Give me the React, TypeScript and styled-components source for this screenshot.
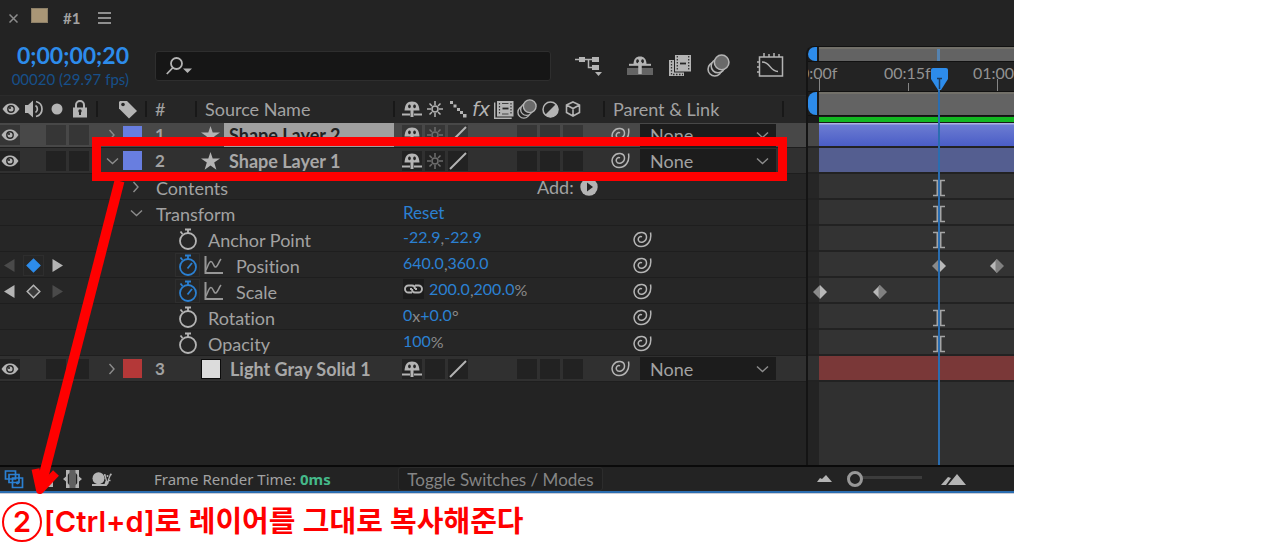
import React from "react";
import styled, { createGlobalStyle } from "styled-components";

const blue = "#2d8ceb";
const text = "#a2a2a2";
const icon = "#b4b4b4";

const Global = createGlobalStyle`
  * { box-sizing: border-box; }
  body { margin: 0; background: #fff; font-family: Lato, "Noto Sans CJK KR", sans-serif; font-variant-ligatures: none; }
  button, input, select { font: inherit; color: inherit; margin: 0; padding: 0; border: 0; background: none; }
  svg { display: block; flex: none; }
`;

const Page = styled.main`
  position: relative;
  overflow: hidden;
`;

const Panel = styled.section`
  width: 100%;
  max-width: 1014px;
  background: #232323;
  color: ${text};
  font-size: 18px;
  line-height: 24px;
  border-bottom: 1px solid #c9ccd6;
`;

const Workspace = styled.div`
  display: grid;
  grid-template-columns: 806px minmax(0, 1fr);
`;

const Outline = styled.div`
  display: flex;
  flex-direction: column;
`;

const TabBar = styled.div`
  display: flex;
  align-items: center;
  height: 36px;
  padding-left: 9px;
`;

const TabClose = styled.button`
  width: 22px;
  display: flex;
`;

const CompSwatch = styled.span`
  width: 17px;
  height: 15px;
  margin-bottom: 5px;
  background: #a99676;
  border: 1px solid #8d8068;
`;

const TabName = styled.span`
  width: 35px;
  margin-left: 15px;
  font-size: 15px;
  font-weight: 700;
`;

const IconButton = styled.button`
  display: flex;
  align-items: center;
  justify-content: center;
`;

const Toolbar = styled.div`
  display: flex;
  align-items: center;
  height: 59px;
`;

const TimeBlock = styled.div`
  width: 129px;
  margin-right: 26px;
  text-align: right;
  white-space: nowrap;
`;

const Timecode = styled.div`
  color: ${blue};
  font-size: 23px;
  font-weight: 700;
  line-height: 26px;
`;

const FrameRate = styled.div`
  color: #17508a;
  font-size: 15px;
  line-height: 22px;
`;

const SearchBox = styled.label`
  display: flex;
  align-items: center;
  width: 396px;
  height: 30px;
  padding-left: 10px;
  background: #161616;
  border: 1px solid #2e2e2e;
  border-radius: 3px;
  input { flex: 1; min-width: 0; outline: 0; }
`;

const ToolGroup = styled.div`
  display: flex;
  align-items: center;
  gap: 17px;
  margin-left: 24px;
`;

const ToolSet = styled.div`
  display: flex;
  align-items: center;
  gap: 16px;
  padding: 0 10px 0 8px;
`;

const outlineColumns = "92px 31px 32px 50px 197px 206px minmax(0, 1fr)";

const HeaderRow = styled.div`
  display: grid;
  grid-template-columns: 98px 49px 50px 198px 210px 179px minmax(0, 1fr);
  align-items: center;
  height: 28px;
  padding-bottom: 1px;
  background: #262626;
  border-top: 1px solid #2b2b2b;
`;

const HeaderCell = styled.div<{ $pad?: number }>`
  display: flex;
  align-items: center;
  height: 16px;
  padding-left: ${(p) => p.$pad ?? 8}px;
  border-right: 2px solid #181818;
`;

const SwitchStrip = styled.div`
  display: flex;
  gap: 3px;
`;

const Slot = styled.span`
  display: flex;
  align-items: center;
  justify-content: center;
  width: 20px;
  height: 20px;
`;

const SwitchCell = styled.button<{ $fill: string }>`
  display: flex;
  align-items: center;
  justify-content: center;
  width: 20px;
  height: 20px;
  background: ${(p) => p.$fill};
`;

const LayerRow = styled.div<{ $selected?: boolean; $first?: boolean }>`
  display: grid;
  grid-template-columns: ${outlineColumns};
  align-items: center;
  height: ${(p) => (p.$first ? 25 : 26)}px;
  background: ${(p) => (p.$selected ? "#484848" : "#303030")};
  border-bottom: 1px solid #1e1e1e;
`;

const Twirl = styled.button`
  display: flex;
  align-items: center;
  justify-content: center;
  width: 20px;
  height: 20px;
`;

const TwirlCell = styled.div`
  padding-left: 10px;
`;

const LabelColor = styled.button<{ $color: string }>`
  width: 19px;
  height: 19px;
  background: ${(p) => p.$color};
`;

const LayerNumber = styled.span`
  font-size: 17px;
  font-weight: 700;
`;

const LayerSource = styled.div`
  display: flex;
  align-items: center;
  margin-left: -4px;
  gap: 4px;
`;

const LayerName = styled.span<{ $selected?: boolean }>`
  width: 170px;
  height: 24px;
  padding-left: 5px;
  font-weight: 700;
  white-space: nowrap;
  color: ${(p) => (p.$selected ? "#222" : "#a8a8a8")};
  background: ${(p) => (p.$selected ? "#a0a0a0" : "transparent")};
`;

const SolidSwatch = styled.span`
  width: 20px;
  height: 20px;
  background: #dcdcdc;
  border: 1px solid #0c0c0c;
`;

const ParentCell = styled.div`
  display: flex;
  align-items: center;
  gap: 10px;
  padding-left: 3px;
`;

const ParentSelect = styled.span`
  display: flex;
  align-items: center;
  width: 136px;
  height: 23px;
  padding-right: 7px;
  background: #1c1c1c;
  select { flex: 1; appearance: none; padding-left: 10px; outline: 0; }
`;

const PropertyRow = styled.div`
  display: grid;
  grid-template-columns: 119px 284px 229px minmax(0, 1fr);
  align-items: center;
  height: 26px;
  background: #262626;
  border-bottom: 1px solid #1e1e1e;
`;

const KeyNav = styled.div`
  display: flex;
  align-items: center;
  padding-left: 4px;
  gap: 8px;
`;

const KeyToggle = styled.button<{ $active?: boolean }>`
  display: flex;
  align-items: center;
  justify-content: center;
  width: 21px;
  height: 21px;
  border: 1px solid ${(p) => (p.$active ? "#2e2e2e" : "transparent")};
`;

const PropertyName = styled.div<{ $depth?: number }>`
  display: flex;
  align-items: center;
  padding-left: ${(p) => (p.$depth ? 56 : 7)}px;
  gap: ${(p) => (p.$depth ? 8 : 10)}px;
`;

const PropertyLabel = styled.span`
  padding-top: 1px;
  padding-left: 4px;
`;

const GroupLabel = styled.span`
  padding-top: 2px;
`;

const Watch = styled.button<{ $on?: boolean }>`
  display: flex;
  align-items: center;
  justify-content: center;
  width: 25px;
  height: 24px;
  margin-right: -4px;
  border: 1px solid ${(p) => (p.$on ? "#2e2e2e" : "transparent")};
`;

const Value = styled.div<{ $large?: boolean }>`
  display: flex;
  align-items: center;
  padding-bottom: ${(p) => (p.$large ? 0 : 4)}px;
  font-size: ${(p) => (p.$large ? 17 : 16)}px;
  line-height: 20px;
  color: #2b80d2;
`;

const Unit = styled.span`
  padding-top: 2px;
  color: #8a8a8a;
`;

const LinkToggle = styled.button`
  display: flex;
  align-items: center;
  justify-content: center;
  width: 21px;
  height: 20px;
  margin-right: 5px;
  background: #1c1c1c;
`;

const AddMenu = styled.div`
  display: flex;
  align-items: center;
  padding-left: 134px;
  gap: 6px;
`;

const Timeline = styled.div`
  position: relative;
  display: flex;
  flex-direction: column;
  min-width: 0;
  overflow: hidden;
  margin-top: 46px;
  border-left: 2px solid #141414;
  border-top-left-radius: 8px;
`;

const Track = styled.div<{ $tone: string; $first?: boolean }>`
  height: ${(p) => (p.$first ? 25 : 26)}px;
  padding-left: 11px;
  background: ${(p) => p.$tone};
  border-bottom: 2px solid #222;
`;

const TrackFill = styled.div<{ $fill: string }>`
  position: relative;
  height: 100%;
  background: ${(p) => p.$fill};
`;

const Navigator = styled.div<{ $tall?: boolean }>`
  display: flex;
  height: ${(p) => (p.$tall ? 25 : 16)}px;
  border-top: 1px solid #111;
  border-bottom: 1px solid #111;
  background: #1c1c1c;
`;

const RangeHandle = styled.button`
  width: 9px;
  margin-right: 2px;
  background: ${blue};
  border-radius: 8px 0 0 8px;
`;

const RangeBar = styled.div`
  flex: 1;
  background: #636363;
  border-top: 2px solid #727069;
`;

const NavigatorMark = styled.div`
  width: 3px;
  height: 100%;
  margin-left: 118px;
  background: #5583b0;
`;

const Ruler = styled.div`
  height: 29px;
  svg { width: 100%; }
`;

const CachedRange = styled.div`
  height: 7px;
  padding: 1px 0 1px 11px;
  background: #1a1a1a;
  &::after { content: ""; display: block; height: 5px; background: #12b821; }
`;

const EmptyTrack = styled.div`
  flex: 1;
  min-height: 83px;
  margin-left: 11px;
  background: #303030;
`;

const Playhead = styled.div`
  position: absolute;
  top: 22px;
  bottom: 0;
  left: 121px;
  width: 20px;
  display: flex;
  flex-direction: column;
  align-items: center;
  &::after { content: ""; flex: 1; width: 2px; background: #2a6db0; }
`;

const Mark = styled.span<{ $at: number }>`
  position: absolute;
  left: ${(p) => p.$at}px;
  top: 2px;
  height: 100%;
  display: flex;
  align-items: center;
`;

const Footer = styled.footer`
  display: flex;
  align-items: center;
  height: 28px;
  padding-left: 4px;
  border-top: 2px solid #0a0a0a;
  border-bottom: 2px solid #2a6db0;
  background: #232323;
`;

const FooterIcons = styled.div`
  display: flex;
  align-items: center;
  gap: 10px;
  width: 150px;
`;

const RenderTime = styled.span`
  width: 244px;
  font-family: "Noto Sans", sans-serif;
  font-size: 15px;
  b { color: #45b98a; }
`;

const ModesButton = styled.button`
  width: 205px;
  height: 24px;
  font-size: 17px;
  color: #858585;
  border: 1px solid #2c2c2c;
  background: #1f1f1f;
  border-radius: 3px;
`;

const Zoom = styled.label`
  display: flex;
  align-items: center;
  margin-left: 214px;
`;

const ZoomRange = styled.input`
  appearance: none;
  width: 75px;
  height: 16px;
  margin: 0 19px 0 15px;
  &::-webkit-slider-runnable-track {
    height: 16px;
    background: linear-gradient(transparent 5px, #3c3c3c 5px, #3c3c3c 8px, transparent 8px);
  }
  &::-webkit-slider-thumb {
    appearance: none;
    width: 16px;
    height: 16px;
    border: 3px solid #989898;
    border-radius: 50%;
    background: #232323;
  }
`;

const Highlight = styled.div`
  position: absolute;
  left: 92px;
  top: 137px;
  width: 695px;
  height: 44px;
  border: 9px solid #f00;
  pointer-events: none;
`;

const Arrow = styled.svg`
  position: absolute;
  left: 20px;
  top: 170px;
  pointer-events: none;
`;

const Caption = styled.p`
  display: flex;
  align-items: center;
  gap: 2px;
  margin: 0;
  padding: 8px 2px;
  color: #f00;
  font-family: Inter, "Noto Sans CJK KR", sans-serif;
  font-size: 29px;
  font-weight: 600;
  line-height: 40px;
  white-space: nowrap;
`;

const StepNumber = styled.span`
  display: flex;
  align-items: center;
  justify-content: center;
  width: 40px;
  height: 40px;
  border: 2px solid #f00;
  border-radius: 50%;
`;

const Eye = () => (
  <svg width="18" height="12" viewBox="0 0 18 12">
    <path d="M.5 6C3.500 1.500 6 .5 9 .5s5.500 1 8.500 5.500c-3 4.500-5.500 5.500-8.500 5.500S3.500 10.500.5 6z" fill={icon} />
    <circle cx="9" cy="6" r="3.900" fill="#262626" />
    <circle cx="9" cy="6" r="2.500" fill={icon} />
    <circle cx="8" cy="5" r="1.100" fill="#262626" />
  </svg>
);

const Speaker = () => (
  <svg width="20" height="18" viewBox="0 0 20 18" fill="none" stroke={icon} strokeWidth="1.700">
    <path d="M1 5h3L9 .5v17L4 13H1z" fill={icon} stroke="none" />
    <path d="M11.500 5.500c2.500 1.500 2.500 5.500 0 7M12 1.500c8 2 8 13 0 15" />
  </svg>
);

const Lock = () => (
  <svg width="16" height="18" viewBox="0 0 16 18">
    <path d="M4 9V5a4 4 0 0 1 8 0v4" fill="none" stroke={icon} strokeWidth="2" />
    <rect x="1" y="7.500" width="14" height="10" fill={icon} />
    <path d="M8 10v5" stroke="#262626" strokeWidth="2" />
    <circle cx="8" cy="11" r="1.700" fill="#262626" />
  </svg>
);

const Tag = () => (
  <svg width="20" height="19" viewBox="0 0 20 19">
    <path d="M1 2l1-1h7l10 10-8 7.500L1 8.500z" fill={icon} />
    <circle cx="5" cy="4.500" r="1.800" fill="#262626" />
  </svg>
);

const Shy = () => (
  <svg width="20" height="16" viewBox="0 0 20 16">
    <path d="M2.500 9.500C3 3.500 5 .5 10 .5s7 3 7.500 9z" fill={icon} />
    <path d="M7.400 3.500a1.400 1.900 0 1 0 .1 0zM12.500 3.500a1.400 1.900 0 1 0 .1 0z" fill="#262626" />
    <path d="M0 13.500h8M12 13.500h8" stroke={icon} strokeWidth="2" />
    <path d="M10 8v8" stroke={icon} strokeWidth="3" />
  </svg>
);

const ShyMaster = () => (
  <svg width="26" height="20" viewBox="0 0 26 20">
    <path d="M0 12h26v7H0z" fill="#646464" />
    <path d="M6.500 8.500C6.500 3 9 .5 13 .5s6.500 2.500 6.500 8z" fill={icon} />
    <path d="M10.500 3.200a1.400 2 0 1 0 .1 0zM15.500 3.200a1.400 2 0 1 0 .1 0z" fill="#262626" />
    <path d="M2 8.800h22" stroke={icon} strokeWidth="2" />
    <path d="M13 6v12" stroke={icon} strokeWidth="3.500" />
  </svg>
);

const Sun = ({ dim }: { dim?: boolean }) => (
  <svg width="16" height="16" viewBox="0 0 16 16" fill="none" stroke={dim ? "#6e6e6e" : icon} strokeWidth="1.500">
    <circle cx="8" cy="8" r="3" />
    <path d="M8 0v4M8 12v4M0 8h4M12 8h4M2.500 2.500l2.500 2.500M11 11l2.500 2.500M13.500 2.500L11 5M5 11l-2.500 2.500" />
  </svg>
);

const Dotted = () => (
  <svg width="18" height="18" viewBox="0 0 18 18" fill={icon}>
    <path d="M1 1h3v3H1zM4.500 4.500h3v3h-3zM8 8h3v3H8zM11 11h3v3h-3zM14 14h3.500v3.500H14z" />
  </svg>
);

const Slash = () => (
  <svg width="18" height="18" viewBox="0 0 18 18">
    <path d="M1 17L17 1" stroke={icon} strokeWidth="2" />
  </svg>
);

const Fx = styled.i`
  color: ${icon};
  font-family: "DejaVu Sans", sans-serif;
  font-size: 19px;
  line-height: 18px;
`;

const Film = () => (
  <svg width="22" height="23" viewBox="0 0 22 23" fill={icon}>
    <path d="M0 6h5v12.500h10V22H0z" />
    <path d="M6 1h16v16.500H6z" />
    <path d="M2.500 7v14M8.300 2v15M19.700 2v15M4 20.500h10" fill="none" stroke="#333" strokeWidth="1.300" strokeDasharray="1.500 1.500" />
    <path d="M11 9.500h6" stroke="#262626" strokeWidth="1.800" />
  </svg>
);

const FilmBoxed = () => (
  <svg width="20" height="19" viewBox="0 0 20 19">
    <path d="M.7 2.500v15.800h17" fill="none" stroke={icon} strokeWidth="1.400" />
    <path d="M3 1h16.500v15.500H3z" fill={icon} />
    <path d="M5.500 3v12M17 3v12" stroke="#333" strokeWidth="1.200" strokeDasharray="1.500 1.500" />
    <path d="M8 3.500h6.500M8 14h6.500" stroke="#444" strokeWidth="1" />
    <path d="M8.500 8.500h6" stroke="#262626" strokeWidth="1.800" />
  </svg>
);

const Blur = ({ size = 20 }: { size?: number }) => (
  <svg width={size} height={size} viewBox="0 0 22 22" fill="#262626" stroke={icon} strokeWidth="1.500">
    <circle cx="7.500" cy="14.500" r="6.500" />
    <circle cx="10.500" cy="11.500" r="6.500" />
    <circle cx="14" cy="8" r="7" fill="#6a6a6a" />
  </svg>
);

const Adjust = () => (
  <svg width="17" height="17" viewBox="0 0 17 17">
    <circle cx="8.500" cy="8.500" r="7.500" fill="none" stroke={icon} strokeWidth="1.500" />
    <path d="M14 3A7.700 7.700 0 1 1 3 14z" fill={icon} />
  </svg>
);

const Cube = () => (
  <svg width="16" height="16" viewBox="0 0 16 16" fill="none" stroke={icon} strokeWidth="1.600">
    <path d="M8 1l6.500 3v7.500L8 15l-6.500-3.500V4zM1.500 4L8 7.500 14.500 4M8 7.500V15" />
  </svg>
);

const Star = () => (
  <svg width="19" height="18" viewBox="0 0 19 18">
    <path d="M9.500 0l2.200 6.400H19l-5.800 4.200 2.200 7.200-5.900-4.400-5.900 4.400 2.200-7.200L0 6.400h7.300z" fill={icon} />
  </svg>
);

const Whip = () => (
  <svg width="19" height="17" viewBox="0 0 19 17" fill="none" stroke={icon} strokeWidth="1.500">
    <path d="M17.500 1.500c1.500 8-3 14-9.500 14S-.5 8.500 2.500 4.500c3-4.500 11-4 11 1.500 0 5-6.500 7-8 3.500C4.500 7 7 4.800 9 5.800" />
  </svg>
);

const Chevron = ({ down }: { down?: boolean }) =>
  down ? (
    <svg width="13" height="8" viewBox="0 0 13 8" fill="none" stroke="#8c8c8c" strokeWidth="1.400">
      <path d="M1 1.500L6.500 6.500 12 1.500" />
    </svg>
  ) : (
    <svg width="8" height="12" viewBox="0 0 8 12" fill="none" stroke="#8c8c8c" strokeWidth="1.400">
      <path d="M1.500 1L6 6l-4.500 5" />
    </svg>
  );

const Stopwatch = ({ on }: { on?: boolean }) => (
  <svg width="20" height="22" viewBox="0 0 20 22" fill="none" stroke={on ? "#2b80d2" : icon} strokeWidth="1.800">
    <circle cx="10" cy="13" r="8" />
    <path d="M7 1.500h6M10 1.500V5M2.500 3.500L4.500 6" />
    {on && <path d="M9.500 14.500L14 9" />}
  </svg>
);

const Graph = () => (
  <svg width="20" height="19" viewBox="0 0 20 19" fill="none" stroke="#979797" strokeWidth="1.500">
    <path d="M1.500 0v17H19" strokeWidth="2" />
    <path d="M2 14C4 10 5 5.500 7 5.500S10 12 12 11s2.500-5 5-8" />
  </svg>
);

const Chain = () => (
  <svg width="19" height="10" viewBox="0 0 19 10" fill="none" stroke={icon} strokeWidth="1.900">
    <path d="M8 8.500H4.500a3.500 3.500 0 0 1 0-7H8c2 0 3 1.800 3 3.500M11 1.500h3.500a3.500 3.500 0 0 1 0 7H11C9 8.500 8 6.700 8 5M6 5h2M11 5h2" />
  </svg>
);

const Arrowhead = ({ left, dim }: { left?: boolean; dim?: boolean }) => (
  <svg width="11" height="13" viewBox="0 0 11 13">
    <path d={left ? "M10.500 0v13L0 6.500z" : "M.5 0v13L11 6.500z"} fill={dim ? "#4a4a4a" : icon} />
  </svg>
);

const Diamond = ({ on }: { on?: boolean }) => (
  <svg width="15" height="15" viewBox="0 0 15 15">
    <path d="M7.500 1.200l6.300 6.300-6.300 6.300-6.300-6.300z" fill={on ? blue : "#3a3a3a"} stroke={on ? blue : icon} strokeWidth="1.500" />
  </svg>
);

const Keyframe = ({ flip }: { flip?: boolean }) => (
  <svg width="14" height="14" viewBox="0 0 14 14">
    <path d="M7 0v14L0 7z" fill={flip ? "#b8b8b8" : "#8a8a8a"} />
    <path d={flip ? "M5.500 1.500L7 0l7 7-7 7-1.500-1.500z" : "M7 0v14l7-7z"} fill={flip ? "#808080" : "#b8b8b8"} />
  </svg>
);

const Beam = () => (
  <svg width="12" height="18" viewBox="0 0 12 18" fill="none" stroke="#a5a5a5">
    <path d="M0 1.500h4.500L6 2.500 7.500 1.500H12M0 16.500h4.500L6 15.500l1.500 1H12" strokeWidth="1.600" />
    <path d="M6 2v14" strokeWidth="5" />
  </svg>
);

const Flowchart = () => (
  <svg width="27" height="20" viewBox="0 0 27 20" fill={icon}>
    <path d="M4 1h6v5H4zM17 1h7v5h-7zM17 9h7v5h-7zM20 16h7l-3.500 4z" />
    <path d="M0 3.500h18M13.500 3.500v8H18" fill="none" stroke={icon} strokeWidth="1.500" />
  </svg>
);

const GraphEditor = () => (
  <svg width="27" height="25" viewBox="0 0 27 25" fill="none" stroke={icon} strokeWidth="1.500">
    <path d="M2.500 4h23v19h-23zM0 9h2.500M0 14h2.500M0 19h2.500M7 0v4M12 1v3M17 0v4M22 1v3" />
    <path d="M5 9c9 0 7 9 16 9.500" />
  </svg>
);

const Search = () => (
  <svg width="26" height="18" viewBox="0 0 26 18">
    <circle cx="10.500" cy="6.500" r="5.500" fill="none" stroke={icon} strokeWidth="1.800" />
    <path d="M7 10.500L.8 17" stroke={icon} strokeWidth="1.800" />
    <path d="M17 11.500h9L21.500 16z" fill={icon} />
  </svg>
);

type LayerProps = { n: number; name: string; color: string; selected?: boolean; open?: boolean; solid?: boolean };

const Layer = ({ n, name, color, selected, open, solid }: LayerProps) => {
  const cell = selected ? "#363636" : "#222";
  return (
    <LayerRow $selected={selected} $first={n === 1}>
      <SwitchStrip>
        <SwitchCell $fill={cell} aria-label="Video"><Eye /></SwitchCell>
        <Slot />
        <SwitchCell $fill={cell} aria-label="Solo" />
        <SwitchCell $fill={cell} aria-label="Lock" />
      </SwitchStrip>
      <TwirlCell><Twirl aria-label="Expand layer"><Chevron down={open} /></Twirl></TwirlCell>
      <LabelColor $color={color} aria-label="Label colour" />
      <LayerNumber>{n}</LayerNumber>
      <LayerSource>
        {solid ? <SolidSwatch /> : <Star />}
        <LayerName $selected={selected}>{name}</LayerName>
      </LayerSource>
      <SwitchStrip>
        <SwitchCell $fill={cell} aria-label="Shy"><Shy /></SwitchCell>
        <SwitchCell $fill={cell} aria-label="Collapse">{!solid && <Sun dim />}</SwitchCell>
        <SwitchCell $fill={cell} aria-label="Quality"><Slash /></SwitchCell>
        <Slot />
        <Slot />
        <SwitchCell $fill={cell} aria-label="Motion blur" />
        <SwitchCell $fill={cell} aria-label="Adjustment" />
        <SwitchCell $fill={cell} aria-label="3D" />
      </SwitchStrip>
      <ParentCell>
        <IconButton aria-label="Pick whip"><Whip /></IconButton>
        <ParentSelect>
          <select aria-label={`Parent of ${name}`}><option>None</option></select>
          <Chevron down />
        </ParentSelect>
      </ParentCell>
    </LayerRow>
  );
};

type PropertyProps = { name: string; keyed?: "on" | "between"; children: React.ReactNode };

const Property = ({ name, keyed, children }: PropertyProps) => (
  <PropertyRow>
    {keyed ? (
      <KeyNav>
        <IconButton aria-label="Previous keyframe"><Arrowhead left dim={keyed === "on"} /></IconButton>
        <KeyToggle $active={keyed === "on"} aria-label="Toggle keyframe"><Diamond on={keyed === "on"} /></KeyToggle>
        <IconButton aria-label="Next keyframe"><Arrowhead dim={keyed !== "on"} /></IconButton>
      </KeyNav>
    ) : <span />}
    <PropertyName $depth={1}>
      <Watch $on={!!keyed} aria-label={`Animate ${name}`}><Stopwatch on={!!keyed} /></Watch>
      {keyed && <Graph />}
      <PropertyLabel>{name}</PropertyLabel>
    </PropertyName>
    <Value>{children}</Value>
    <Twirl aria-label={`Pick whip for ${name}`}><Whip /></Twirl>
  </PropertyRow>
);

const PropertyTrack = ({ children }: { children?: React.ReactNode }) => (
  <Track $tone="#262626">
    <TrackFill $fill="#333">{children ?? <Mark $at={114}><Beam /></Mark>}</TrackFill>
  </Track>
);

export default function App() {
  return (
    <Page>
      <Global />
      <Panel>
        <Workspace>
          <Outline>
            <TabBar>
              <TabClose aria-label="Close tab">
                <svg width="9" height="9" viewBox="0 0 9 9" stroke="#8c8c8c" strokeWidth="1.500"><path d="M.5.5l8 8M8.500.5l-8 8" /></svg>
              </TabClose>
              <CompSwatch />
              <TabName>#1</TabName>
              <IconButton aria-label="Panel menu">
                <svg width="13" height="12" viewBox="0 0 13 12" stroke={icon} strokeWidth="1.500"><path d="M0 1h13M0 6h13M0 11h13" /></svg>
              </IconButton>
            </TabBar>
            <Toolbar>
              <TimeBlock>
                <Timecode>0;00;00;20</Timecode>
                <FrameRate>00020 (29.97 fps)</FrameRate>
              </TimeBlock>
              <SearchBox>
                <Search />
                <input type="text" aria-label="Search layers" />
              </SearchBox>
              <ToolGroup>
                <IconButton aria-label="Mini-flowchart"><Flowchart /></IconButton>
                <ToolSet>
                  <IconButton aria-label="Hide shy layers"><ShyMaster /></IconButton>
                  <IconButton aria-label="Frame blending"><Film /></IconButton>
                  <IconButton aria-label="Motion blur"><Blur size={23} /></IconButton>
                </ToolSet>
                <IconButton aria-label="Graph editor"><GraphEditor /></IconButton>
              </ToolGroup>
            </Toolbar>
            <HeaderRow>
              <HeaderCell $pad={1}>
                <SwitchStrip>
                  <Slot><Eye /></Slot>
                  <Slot><Speaker /></Slot>
                  <Slot><svg width="12" height="12" viewBox="0 0 12 12"><circle cx="6" cy="6" r="5.500" fill={icon} /></svg></Slot>
                  <Slot><Lock /></Slot>
                </SwitchStrip>
              </HeaderCell>
              <HeaderCell $pad={20}><Tag /></HeaderCell>
              <HeaderCell>#</HeaderCell>
              <HeaderCell>Source Name</HeaderCell>
              <HeaderCell $pad={7}>
                <SwitchStrip>
                  <Slot><Shy /></Slot>
                  <Slot><Sun /></Slot>
                  <Slot><Dotted /></Slot>
                  <Slot><Fx>fx</Fx></Slot>
                  <Slot><FilmBoxed /></Slot>
                  <Slot><Blur /></Slot>
                  <Slot><Adjust /></Slot>
                  <Slot><Cube /></Slot>
                </SwitchStrip>
              </HeaderCell>
              <HeaderCell>Parent &amp; Link</HeaderCell>
            </HeaderRow>
            <Layer n={1} name="Shape Layer 2" color="#687ee0" selected />
            <Layer n={2} name="Shape Layer 1" color="#687ee0" open />
            <PropertyRow>
              <span />
              <PropertyName>
                <Twirl aria-label="Expand contents"><Chevron /></Twirl>
                <GroupLabel>Contents</GroupLabel>
              </PropertyName>
              <AddMenu>
                Add:
                <IconButton aria-label="Add shape content">
                  <svg width="18" height="18" viewBox="0 0 18 18"><circle cx="9" cy="9" r="8.700" fill={icon} /><path d="M7 4.500v9l6-4.500z" fill="#262626" /></svg>
                </IconButton>
              </AddMenu>
            </PropertyRow>
            <PropertyRow>
              <span />
              <PropertyName>
                <Twirl aria-label="Collapse transform"><Chevron down /></Twirl>
                <GroupLabel>Transform</GroupLabel>
              </PropertyName>
              <Value $large><button>Reset</button></Value>
            </PropertyRow>
            <Property name="Anchor Point">-22.9<Unit>,</Unit>-22.9</Property>
            <Property name="Position" keyed="on">640.0<Unit>,</Unit>360.0</Property>
            <Property name="Scale" keyed="between">
              <LinkToggle aria-label="Constrain proportions"><Chain /></LinkToggle>
              200.0<Unit>,</Unit>200.0<Unit>%</Unit>
            </Property>
            <Property name="Rotation">0<Unit>x</Unit>+0.0<Unit>°</Unit></Property>
            <Property name="Opacity">100<Unit>%</Unit></Property>
            <Layer n={3} name="Light Gray Solid 1" color="#b43838" solid />
          </Outline>
          <Timeline>
            <Navigator>
              <RangeHandle aria-label="Visible range start" />
              <RangeBar><NavigatorMark /></RangeBar>
            </Navigator>
            <Ruler>
              <svg height="29" fill="#929292" fontSize="16">
                <text x="-8" y="17">0:00f</text>
                <text x="76" y="17">00:15f</text>
                <text x="165" y="17">01:00f</text>
                <path d="M11.500 17v12M100.500 21v8M189.500 17v12" stroke="#858585" />
              </svg>
            </Ruler>
            <Navigator $tall>
              <RangeHandle aria-label="Work area start" />
              <RangeBar />
            </Navigator>
            <CachedRange />
            <Track $tone="#484848" $first><TrackFill $fill="linear-gradient(#aab2e2 0 1px, #6c7cd2 2px, #4a5dc6)" /></Track>
            <Track $tone="#303030"><TrackFill $fill="#545e90" /></Track>
            <PropertyTrack />
            <PropertyTrack />
            <PropertyTrack />
            <PropertyTrack>
              <Mark $at={113}><Keyframe /></Mark>
              <Mark $at={171}><Keyframe flip /></Mark>
            </PropertyTrack>
            <PropertyTrack>
              <Mark $at={-6}><Keyframe /></Mark>
              <Mark $at={54}><Keyframe flip /></Mark>
            </PropertyTrack>
            <PropertyTrack />
            <PropertyTrack />
            <Track $tone="#303030"><TrackFill $fill="#7a3838" /></Track>
            <EmptyTrack />
            <Playhead>
              <svg width="17" height="22" viewBox="0 0 17 22"><path d="M0 2q0-2 2-2h13q2 0 2 2v9l-7 11H7L0 11z" fill={blue} /><path d="M6 10.500h5M8.500 10v11" stroke="#1c3c60" strokeWidth="1.500" /></svg>
            </Playhead>
          </Timeline>
        </Workspace>
        <Footer>
          <FooterIcons>
            <IconButton aria-label="Layer switches">
              <svg width="20" height="19" viewBox="0 0 20 19" fill="#232323" stroke="#2b80d2" strokeWidth="1.700"><path d="M1.500 1h10v8h-10zM5 4.500h10v8H5zM8.500 8h10v9.500h-10z" /><circle cx="13.500" cy="12.800" r=".8" /></svg>
            </IconButton>
            <IconButton aria-label="Transfer controls">
              <svg width="19" height="18" viewBox="0 0 19 18" fill={icon}><path d="M5 1h5v8H5zM12 8h7v9h-7z" /></svg>
            </IconButton>
            <IconButton aria-label="In and out columns">
              <svg width="19" height="18" viewBox="0 0 19 18" fill={icon}><path d="M6 0h7v18H6z" fill="#606060" /><path d="M3 0h3.500v2.500L4.800 5v8l1.700 2.500V18H3v-6.500L0 9l3-2.500zM16 0h-3.500v2.500L14.200 5v8l-1.700 2.500V18H16v-6.500L19 9l-3-2.500z" /></svg>
            </IconButton>
            <IconButton aria-label="Render time">
              <svg width="20" height="15" viewBox="0 0 20 15" fill={icon}><circle cx="6.500" cy="6.300" r="6" /><path d="M0 14v-2h12.500l1-3h3.500l-.5 2.500-2 2.500z" /><path d="M14.500 9L13 3.500M16 9l2.500-6.500M16 8.500h2.500" fill="none" stroke={icon} strokeWidth="1.300" /><circle cx="12.800" cy="3" r="1" /><circle cx="15.500" cy="4" r="1" /><circle cx="18.800" cy="2.500" r="1" /></svg>
            </IconButton>
          </FooterIcons>
          <RenderTime>Frame Render Time: <b>0ms</b></RenderTime>
          <ModesButton>Toggle Switches / Modes</ModesButton>
          <Zoom>
            <svg width="15" height="8" viewBox="0 0 15 8" fill={icon}><path d="M0 7l3-4 2 1 4-4 6 7z" /></svg>
            <ZoomRange type="range" aria-label="Timeline zoom" defaultValue={0} />
            <svg width="26" height="13" viewBox="0 0 26 13" fill={icon}><path d="M0 12l7-8 3 1-5 7zM7 12L16 1l9 11z" /></svg>
          </Zoom>
        </Footer>
      </Panel>
      <Caption>
        <StepNumber>2</StepNumber>
        <span>[Ctrl+d]로 레이어를 그대로 복사해준다</span>
      </Caption>
      <Highlight />
      <Arrow width="110" height="330" viewBox="0 0 110 330" fill="none" stroke="#f00">
        <path d="M99.500 11L22 312" strokeWidth="10" />
        <path d="M15.500 299l4.500 21 16-17" strokeWidth="8" strokeLinejoin="round" />
      </Arrow>
    </Page>
  );
}
